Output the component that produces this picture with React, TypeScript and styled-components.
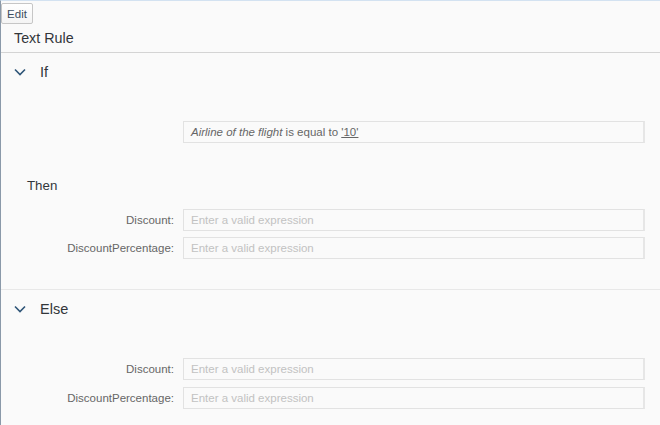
import React from "react";
import styled, { createGlobalStyle } from "styled-components";

const Global = createGlobalStyle`
  html, body { margin: 0; padding: 0; background: #fafafa; }
  body { font-family: "Liberation Sans", Arial, sans-serif; }
`;

const Page = styled.div`
  box-sizing: border-box;
  width: 660px;
  height: 425px;
  overflow: hidden;
  background: #fafafa;
  border-top: 1px solid #d3e2f1;
  border-left: 1px solid #8a99a9;
`;

const Toolbar = styled.div`
  display: flex;
  padding-top: 2px;
`;

const EditButton = styled.button`
  box-sizing: border-box;
  height: 21px;
  width: 32px;
  padding: 0;
  font-family: inherit;
  font-size: 11.5px;
  color: #3e4e60;
  background: linear-gradient(#ffffff, #f4f4f4);
  border: 1px solid #c6c6c6;
  border-radius: 2px;
`;

const Title = styled.div`
  height: 28px;
  line-height: 28px;
  padding-left: 13px;
  font-size: 14.3px;
  color: #32363a;
  border-bottom: 1px solid #d4d4d4;
`;

const Section = styled.section<{ $divider?: boolean }>`
  border-bottom: ${(p) => (p.$divider ? "1px solid #e8e8e8" : "none")};
  padding-bottom: ${(p) => (p.$divider ? "30px" : "0")};
`;

const SectionHeader = styled.div`
  display: flex;
  align-items: center;
  height: 38px;
  padding-left: 13px;
  gap: 14px;
  font-size: 14.5px;
  color: #32363a;
`;

const Chevron = () => (
  <svg width="12" height="8" viewBox="0 0 12 8">
    <path d="M1 1.5 L6 6.5 L11 1.5" fill="none" stroke="#2f5578" strokeWidth="1.6" />
  </svg>
);

const Body = styled.div`
  padding-top: 30px;
  padding-right: 15px;
`;

const Grid = styled.div<{ $gap?: number }>`
  display: grid;
  grid-template-columns: 173px 1fr;
  column-gap: 9px;
  row-gap: ${(p) => p.$gap ?? 6}px;
  align-items: center;
`;

const Label = styled.div`
  text-align: right;
  font-size: 11.5px;
  color: #666666;
`;

const Field = styled.div<{ $col?: number }>`
  box-sizing: border-box;
  grid-column: ${(p) => p.$col ?? 2};
  height: 22px;
  line-height: 20px;
  padding-left: 7px;
  font-size: 11.5px;
  color: #666666;
  background: #fafafa;
  border: 1px solid #e2e2e2;
  border-right: 2px solid #e6e6e6;
`;

const Placeholder = styled.span`
  color: #c2c2c2;
`;

const Value = styled.span`
  text-decoration: underline;
`;

const Then = styled.div`
  margin-top: 33px;
  margin-bottom: 13px;
  padding-left: 26px;
  line-height: 20px;
  font-size: 13.3px;
  color: #32363a;
`;

const Row = ({ label }: { label: string }) => (
  <>
    <Label>{label}</Label>
    <Field>
      <Placeholder>Enter a valid expression</Placeholder>
    </Field>
  </>
);

export default function App() {
  return (
    <>
      <Global />
      <Page>
        <Toolbar>
          <EditButton>Edit</EditButton>
        </Toolbar>
        <Title>Text Rule</Title>
        <Section $divider>
          <SectionHeader>
            <Chevron />
            <span>If</span>
          </SectionHeader>
          <Body>
            <Grid>
              <Field $col={2}>
                <i>Airline of the flight</i> is equal to <Value>'10'</Value>
              </Field>
            </Grid>
            <Then>Then</Then>
            <Grid>
              <Row label="Discount:" />
              <Row label="DiscountPercentage:" />
            </Grid>
          </Body>
        </Section>
        <Section>
          <SectionHeader>
            <Chevron />
            <span>Else</span>
          </SectionHeader>
          <Body>
            <Grid $gap={7}>
              <Row label="Discount:" />
              <Row label="DiscountPercentage:" />
            </Grid>
          </Body>
        </Section>
      </Page>
    </>
  );
}
